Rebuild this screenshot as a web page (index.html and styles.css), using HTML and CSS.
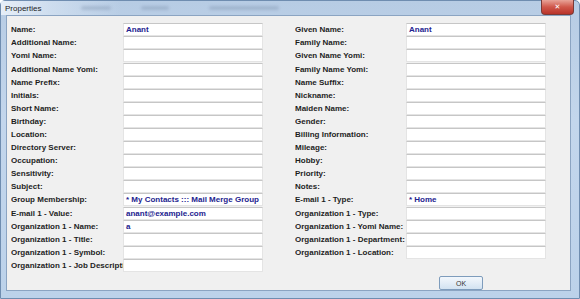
FILE: index.html
```html
<!DOCTYPE html>
<html lang="en">
<head>
  <meta charset="UTF-8">
  <title>Properties</title>
  <link rel="stylesheet" href="styles.css">
</head>
<body>
  <div class="window">
    <div class="titlebar">
      <span class="title">Properties</span>
      <div class="blur-text">
        <span class="blur b1"></span>
        <span class="blur b2"></span>
        <span class="blur b3"></span>
      </div>
      <button class="close-btn">&#x2715;</button>
    </div>

    <div class="client">
      <div class="form">
        <div class="column">
          <label>Name:</label><div class="field">Anant</div>
          <label>Additional Name:</label><div class="field"></div>
          <label>Yomi Name:</label><div class="field"></div>
          <label>Additional Name Yomi:</label><div class="field"></div>
          <label>Name Prefix:</label><div class="field"></div>
          <label>Initials:</label><div class="field"></div>
          <label>Short Name:</label><div class="field"></div>
          <label>Birthday:</label><div class="field"></div>
          <label>Location:</label><div class="field"></div>
          <label>Directory Server:</label><div class="field"></div>
          <label>Occupation:</label><div class="field"></div>
          <label>Sensitivity:</label><div class="field"></div>
          <label>Subject:</label><div class="field"></div>
          <label>Group Membership:</label><div class="field">* My Contacts ::: Mail Merge Group</div>
          <label>E-mail 1 - Value:</label><div class="field">anant@example.com</div>
          <label>Organization 1 - Name:</label><div class="field">a</div>
          <label>Organization 1 - Title:</label><div class="field"></div>
          <label>Organization 1 - Symbol:</label><div class="field"></div>
          <label>Organization 1 - Job Description:</label><div class="field"></div>
        </div>

        <div class="column">
          <label>Given Name:</label><div class="field">Anant</div>
          <label>Family Name:</label><div class="field"></div>
          <label>Given Name Yomi:</label><div class="field"></div>
          <label>Family Name Yomi:</label><div class="field"></div>
          <label>Name Suffix:</label><div class="field"></div>
          <label>Nickname:</label><div class="field"></div>
          <label>Maiden Name:</label><div class="field"></div>
          <label>Gender:</label><div class="field"></div>
          <label>Billing Information:</label><div class="field"></div>
          <label>Mileage:</label><div class="field"></div>
          <label>Hobby:</label><div class="field"></div>
          <label>Priority:</label><div class="field"></div>
          <label>Notes:</label><div class="field"></div>
          <label>E-mail 1 - Type:</label><div class="field">* Home</div>
          <label>Organization 1 - Type:</label><div class="field"></div>
          <label>Organization 1 - Yomi Name:</label><div class="field"></div>
          <label>Organization 1 - Department:</label><div class="field"></div>
          <label>Organization 1 - Location:</label><div class="field"></div>
        </div>
      </div>

      <div class="footer">
        <button class="ok-btn">OK</button>
      </div>
    </div>
  </div>
</body>
</html>
```

FILE: styles.css
```css
html,
body {
  margin: 0;
  padding: 0;
}

body {
  width: 580px;
  height: 299px;
  overflow: hidden;
  font-family: "Liberation Sans", Arial, sans-serif;
  color: #1e1e1e;
}

.window {
  width: 580px;
  height: 299px;
  box-sizing: border-box;
  display: flex;
  flex-direction: column;
  background: linear-gradient(to bottom, #b7cce4, #c3d6ec 40%, #bcd2ea);
  border: 1px solid #6f8db0;
  border-radius: 5px 5px 0 0;
  padding: 0 8px 7px 5px;
}

/* Title bar */
.titlebar {
  height: 18px;
  display: flex;
  align-items: center;
  position: relative;
  background: linear-gradient(to right, rgba(235, 242, 250, 0.9) 0, rgba(220, 232, 245, 0.6) 50px, rgba(180, 200, 225, 0) 120px);
  margin-left: -5px;
  padding-left: 4px;
}

.title {
  font-size: 8px;
  color: #222;
}

.blur-text {
  display: flex;
  gap: 30px;
  margin-left: 40px;
}

.blur {
  height: 4px;
  border-radius: 2px;
  background: rgba(120, 140, 170, 0.35);
  filter: blur(1.5px);
}

.b1 { width: 30px; }
.b2 { width: 28px; }
.b3 { width: 70px; margin-left: 10px; }

.close-btn {
  position: absolute;
  right: -3px;
  top: -1px;
  width: 33px;
  height: 15px;
  border: 1px solid #7a3a36;
  border-top: none;
  border-radius: 0 0 4px 4px;
  background: linear-gradient(to bottom, #e8a398, #d0574a 50%, #b8332a);
  color: #fff;
  font-family: "DejaVu Sans", sans-serif;
  font-size: 7px;
  font-weight: bold;
  padding: 0;
  line-height: 13px;
}

/* Client area */
.client {
  flex: 1;
  background: #f0f0f0;
  border: 1px solid #8ba4c2;
  display: flex;
  flex-direction: column;
  padding: 7px 0 0 4px;
}

.form {
  display: flex;
  gap: 32px;
}

.column {
  display: grid;
  grid-template-columns: 112px 140px;
  grid-auto-rows: 13.1px;
  align-items: center;
}

.column:last-child {
  grid-template-columns: 111px 140px;
}

.column label {
  font-size: 8px;
  font-weight: bold;
  white-space: nowrap;
  overflow: hidden;
  line-height: 13px;
}

.field {
  height: 13px;
  box-sizing: border-box;
  background: #fff;
  border: 1px solid #e4e4e4;
  border-top-color: #c6c6c6;
  padding-left: 2px;
  font-size: 8px;
  font-weight: bold;
  color: #23238f;
  line-height: 11px;
  white-space: nowrap;
  overflow: hidden;
}

.footer {
  display: flex;
  justify-content: flex-end;
  padding-right: 87px;
  margin-top: 4px;
}

.ok-btn {
  width: 44px;
  height: 14px;
  padding: 0;
  border: 1px solid #7e9cbc;
  border-radius: 2px;
  background: linear-gradient(to bottom, #f2f7fc, #e3edf7 50%, #d2e2f1);
  font-size: 7px;
  color: #333;
}
```
